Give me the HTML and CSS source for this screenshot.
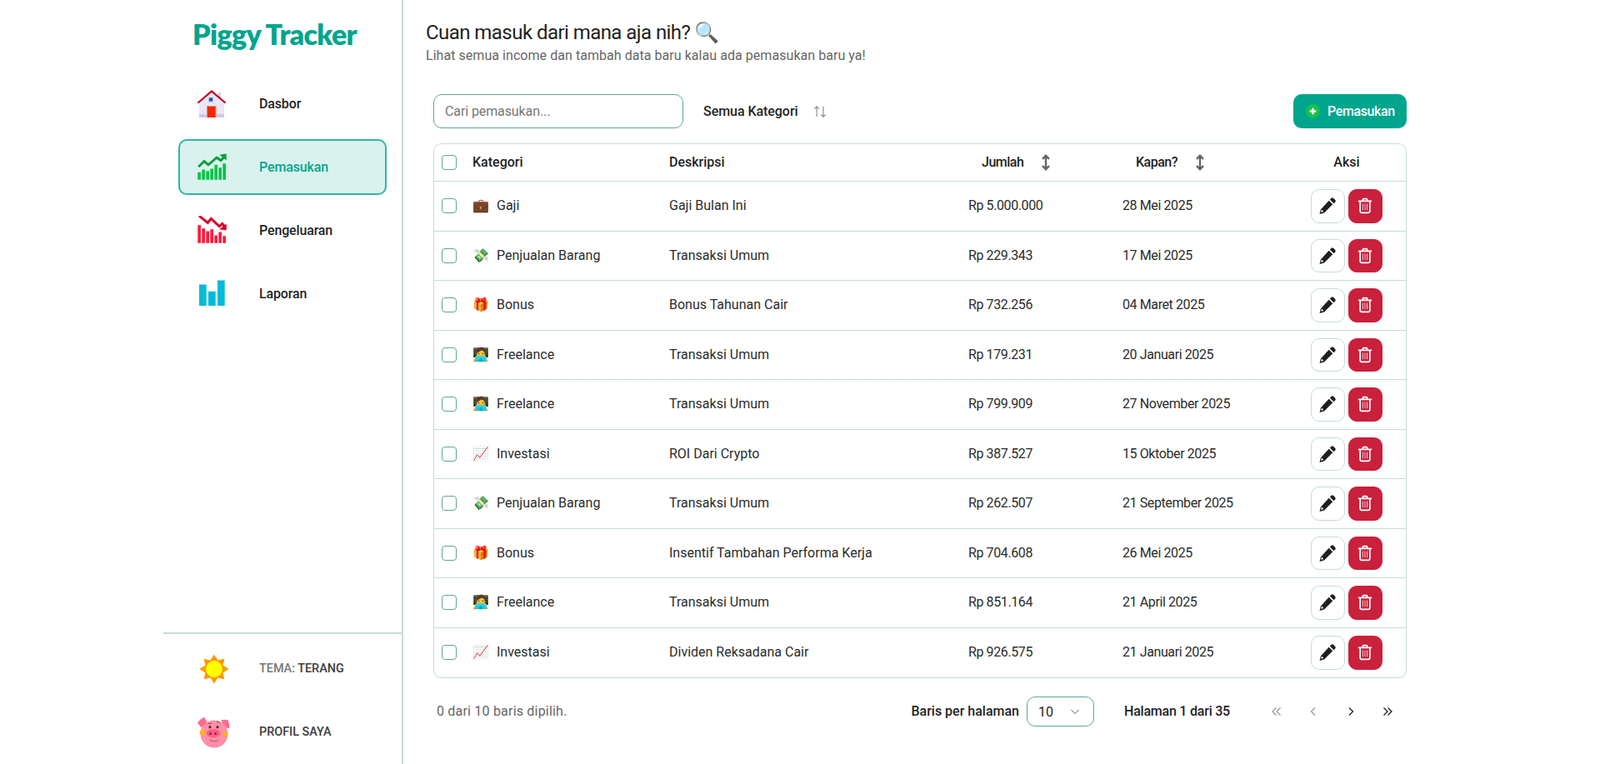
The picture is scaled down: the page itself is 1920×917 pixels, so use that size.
FILE: index.html
```html
<!DOCTYPE html>
<html lang="id">
<head>
<meta charset="utf-8">
<title>Piggy Tracker</title>
<link rel="stylesheet" href="styles.css">
</head>
<body>
<svg class="sprites" aria-hidden="true">
  <symbol id="i-pen" viewBox="0 0 20 20"><path d="M14.200 1.600a1.600 1.600 0 0 1 2.200 0l2 2a1.600 1.600 0 0 1 0 2.200l-1.600 1.600-4.200-4.200zM11.500 4.300l4.200 4.200-9.300 9.300-5 1.200 1.200-5zM3.600 14.200l-.7 2.900 2.900-.7z"/></symbol>
  <symbol id="i-trash" viewBox="0 0 20 20"><path d="M2.600 4.400h14.800M7.400 4.200V2.600c0-.5.4-.9.900-.9h3.400c.5 0 .9.400.9.900v1.600M4.200 4.600v11.800c0 1.100.8 1.900 1.900 1.900h7.800c1.100 0 1.900-.8 1.900-1.900V4.600" fill="none" stroke="currentColor" stroke-width="1.700" stroke-linecap="round"/><path d="M7.400 7.600v7.600M10 7.600v7.600M12.600 7.600v7.600" fill="none" stroke="currentColor" stroke-width="1" opacity=".75"/></symbol>
  <symbol id="i-sort" viewBox="0 0 14 20"><path d="M7 2.500v15M3 5.800 7 1.800l4 4M3 14.200l4 4 4-4" fill="none" stroke="currentColor" stroke-width="2.400"/></symbol>
</svg>
<div class="app">
  <aside class="sidebar">
    <div class="logo">Piggy Tracker</div>
    <nav class="nav">
      <a class="nav-item">
        <svg class="nav-icon" viewBox="0 0 36 36"><path d="M25.500 4H29v12h-3.500z" fill="#d6d2f0"/><path d="M3 15 18 3l15 12v19H3z" fill="#e8e6f7"/><path d="M3 30h30v4H3z" fill="#cfc8ee"/><path d="M14 9.500h6v6h-6z" fill="#b9c3e8"/><path d="M15 10.500h4v4h-4z" fill="#2c4fa8"/><path d="M12 20h11.500v14H12z" fill="#f08a70"/><path d="M13 21h9.500v13H13z" fill="#ee2a05"/><path d="M1.500 16.500 18 2.500l16.500 14" fill="none" stroke="#c4001a" stroke-width="2.200"/></svg>
        <span>Dasbor</span>
      </a>
      <a class="nav-item is-active">
        <svg class="nav-icon" viewBox="0 0 36 36"><path d="M1.300 23.800H5v9H1.300zM6.300 20.500H10v12.300H6.300zM11.300 22.200H15v10.600h-3.700zM16.300 19.500H20v13.300h-3.700zM21.300 14.800H25v18h-3.700zM26.300 18.200H30v14.600h-3.700zM31.300 13.200H35v19.600h-3.700z" fill="#0cc24a"/><path d="M2.300 17.200 9 10.500l5 4.300L24 6.200l5 3.300 5.700-5.700" fill="none" stroke="#0aa03c" stroke-width="3"/><path d="m27.300 2.800 8.400-1.300v8z" fill="#0aa03c"/></svg>
        <span>Pemasukan</span>
      </a>
      <a class="nav-item">
        <svg class="nav-icon" viewBox="0 0 36 36"><path d="M1.300 11.200H5v21.600H1.300zM6.300 15.200H10v17.600H6.300zM11.300 18.500H15v14.300h-3.700zM16.300 16.200H20v16.600h-3.700zM21.300 23.500H25v9.300h-3.700zM26.300 19.500H30v13.300h-3.700zM31.300 24.200H35v8.600h-3.700z" fill="#ff1a3c"/><path d="m3 .2 10.300 8.300 4-5 10 9.300 3.400-3.300 4 4.700" fill="none" stroke="#d8002e" stroke-width="3"/><path d="m27.300 16.200 8.400 1.300v-8z" fill="#d8002e"/></svg>
        <span>Pengeluaran</span>
      </a>
      <a class="nav-item">
        <svg class="nav-icon" viewBox="0 0 36 36"><path d="M3 6.500h8.700V32H3zM14 14.700h8.700V32H14zM25 1.500h8.700V32H25z" fill="#00bcd9"/></svg>
        <span>Laporan</span>
      </a>
    </nav>
    <div class="side-bottom">
      <a class="nav-item nav-upper">
        <svg class="nav-icon nav-icon-wide" viewBox="0 0 40 40"><path d="M21 2.500 25.400 9.380 33.370 7.630 31.620 15.600 38.500 20 31.620 24.400 33.370 32.370 25.400 30.620 21 37.500 16.600 30.620 8.630 32.370 10.380 24.400 3.500 20 10.380 15.600 8.630 7.630 16.600 9.380z" fill="#ff9800"/><circle cx="21" cy="20" r="10" fill="#ffff00"/></svg>
        <span><span class="muted">TEMA:</span> TERANG</span>
      </a>
      <a class="nav-item nav-upper">
        <svg class="nav-icon nav-icon-wide" viewBox="0 0 40 40"><path d="M1 8.700C3 5.500 6 3 9.300 2l3.400 6-7 6.500zM29.300 5.300c3-.9 6-.9 8.400 0 1 3 1.600 6.500 1.600 10L33 14z" fill="#ff6b8e"/><ellipse cx="21" cy="22" rx="16.500" ry="16.500" fill="#ff8fa8"/><circle cx="7" cy="20.300" r="3.300" fill="#ffb020"/><circle cx="34" cy="22" r="3" fill="#ffb020"/><ellipse cx="20" cy="21.300" rx="8.300" ry="5" fill="#ff5c85"/><circle cx="16.700" cy="21.700" r="1.400" fill="#7a2a38"/><circle cx="22.700" cy="21.700" r="1.400" fill="#7a2a38"/><circle cx="16" cy="13.700" r="1.600" fill="#5a2a2a"/><circle cx="25" cy="13.700" r="1.600" fill="#5a2a2a"/><path d="M13.500 10c1.500-1 3-1 4.500-.5M24 7.500c1.500 0 3 .5 4 1.500" fill="none" stroke="#7a3a3a" stroke-width=".9"/><path d="M15.300 28.700Q21 32.500 26 29.700" fill="none" stroke="#b84860" stroke-width="1"/></svg>
        <span>PROFIL SAYA</span>
      </a>
    </div>
  </aside>
  <main class="main">
    <header class="page-head">
      <h1 class="page-title">Cuan masuk dari mana aja nih? <span class="title-emoji">🔍</span></h1>
      <p class="page-sub">Lihat semua income dan tambah data baru kalau ada pemasukan baru ya!</p>
    </header>
    <div class="content">
      <div class="toolbar">
        <input class="search" type="text" placeholder="Cari pemasukan...">
        <div class="filter">
          <span>Semua Kategori</span>
          <svg class="filter-icon" viewBox="0 0 16 16"><path d="M4.500 13.500v-11M2 5l2.500-2.500L7 5M11.500 2.500v11M9 11l2.500 2.500L14 11" fill="none" stroke="currentColor" stroke-width="1"/></svg>
        </div>
        <button class="add-btn" type="button">
          <svg class="add-icon" viewBox="0 0 16 16"><circle cx="8" cy="8" r="8" fill="#16c050"/><path d="M8 4.500v7M4.500 8h7" stroke="#fff" stroke-width="2.200"/></svg>
          Pemasukan
        </button>
      </div>
      <div class="table-wrap">
        <table class="table">
          <colgroup>
            <col class="col-check"><col class="col-cat"><col class="col-desc"><col class="col-amount"><col class="col-date"><col class="col-action">
          </colgroup>
          <thead>
            <tr>
              <th class="cell-check"><span class="check"></span></th>
              <th>Kategori</th>
              <th>Deskripsi</th>
              <th class="th-sort"><span class="sort-label">Jumlah<svg class="sort-icon"><use href="#i-sort"/></svg></span></th>
              <th class="th-sort"><span class="sort-label">Kapan?<svg class="sort-icon"><use href="#i-sort"/></svg></span></th>
              <th class="th-action">Aksi</th>
            </tr>
          </thead>
          <tbody id="rows"></tbody>
        </table>
      </div>
      <div class="foot">
        <div class="foot-count">0 dari 10 baris dipilih.</div>
        <div class="foot-label">Baris per halaman</div>
        <div class="select"><span>10</span><svg class="select-icon" viewBox="0 0 16 16"><path d="m3.500 6 4.500 4.500L12.500 6" fill="none" stroke="currentColor" stroke-width="1.200"/></svg></div>
        <div class="foot-page">Halaman 1 dari 35</div>
        <div class="pager">
          <svg class="page-btn is-off" viewBox="0 0 16 16"><path d="M7.500 3.500 3 8l4.500 4.500M12.500 3.500 8 8l4.500 4.500"/></svg>
          <svg class="page-btn is-off" viewBox="0 0 16 16"><path d="M10 3.500 5.500 8l4.500 4.500"/></svg>
          <svg class="page-btn" viewBox="0 0 16 16"><path d="M6 3.500 10.500 8 6 12.500"/></svg>
          <svg class="page-btn" viewBox="0 0 16 16"><path d="M3.500 3.500 8 8l-4.500 4.500M8.500 3.500 13 8l-4.500 4.500"/></svg>
        </div>
      </div>
    </div>
  </main>
</div>
<script src="app.js"></script>
</body>
</html>
```
FILE: app.js
```js
var data = [
  ["💼", "Gaji", "Gaji Bulan Ini", "Rp 5.000.000", "28 Mei 2025"],
  ["💸", "Penjualan Barang", "Transaksi Umum", "Rp 229.343", "17 Mei 2025"],
  ["🎁", "Bonus", "Bonus Tahunan Cair", "Rp 732.256", "04 Maret 2025"],
  ["🧑‍💻", "Freelance", "Transaksi Umum", "Rp 179.231", "20 Januari 2025"],
  ["🧑‍💻", "Freelance", "Transaksi Umum", "Rp 799.909", "27 November 2025"],
  ["📈", "Investasi", "ROI Dari Crypto", "Rp 387.527", "15 Oktober 2025"],
  ["💸", "Penjualan Barang", "Transaksi Umum", "Rp 262.507", "21 September 2025"],
  ["🎁", "Bonus", "Insentif Tambahan Performa Kerja", "Rp 704.608", "26 Mei 2025"],
  ["🧑‍💻", "Freelance", "Transaksi Umum", "Rp 851.164", "21 April 2025"],
  ["📈", "Investasi", "Dividen Reksadana Cair", "Rp 926.575", "21 Januari 2025"]
];
document.getElementById("rows").innerHTML = data.map(function (r) {
  return '<tr><td class="cell-check"><span class="check"></span></td>' +
    '<td><span class="cat"><span class="emoji">' + r[0] + '</span>' + r[1] + '</span></td>' +
    '<td>' + r[2] + '</td><td class="cell-num">' + r[3] + '</td><td class="cell-num">' + r[4] + '</td>' +
    '<td class="cell-action"><span class="actions">' +
    '<button class="act act-edit" type="button"><svg class="act-icon"><use href="#i-pen"/></svg></button>' +
    '<button class="act act-del" type="button"><svg class="act-icon"><use href="#i-trash"/></svg></button>' +
    '</span></td></tr>';
}).join("");
```
FILE: styles.css
```css
* { box-sizing: border-box; }
html, body { margin: 0; height: 100%; }
body {
  background: #fff;
  color: #1f1f1f;
  font-family: Roboto, "Noto Color Emoji", sans-serif;
  font-size: 16px;
  overflow: hidden;
}
.sprites { display: none; }
.app { display: flex; max-width: 1528px; height: 917px; margin: 0 auto; }

.sidebar {
  width: 288px;
  flex: none;
  display: flex;
  flex-direction: column;
  border-right: 2px solid #c5dcd9;
}
.logo {
  height: 91px;
  padding: 19px 0 0 35px;
  font-family: Lato, sans-serif;
  font-size: 34px;
  font-weight: 800;
  line-height: 44px;
  letter-spacing: -0.65px;
  color: #00a58d;
}
.nav { display: flex; flex-direction: column; gap: 9px; padding: 0 18px; }
.nav-item {
  display: flex;
  align-items: center;
  height: 67px;
  padding-left: 20px;
  border: 2px solid transparent;
  border-radius: 10px;
  font-weight: 500;
  letter-spacing: -0.15px;
  color: #1f1f1f;
}
.nav-item.is-active { background: #d9f2ee; border-color: #2fb5a3; color: #00a58d; }
.nav-icon { width: 36px; height: 36px; margin-right: 39px; flex: none; }
.nav-icon-wide { width: 40px; height: 40px; margin-right: 35px; }
.nav-upper { color: #3c3c3c; font-size: 14.4px; letter-spacing: 0; }
.muted { color: #777; }
.side-bottom {
  margin-top: auto;
  padding: 8px 18px 5px;
  display: flex;
  flex-direction: column;
  gap: 9px;
  border-top: 2px solid #c5dcd9;
}

.main { flex: 1; padding: 0 36px 0 27px; min-width: 0; }
.page-head { height: 113px; padding-top: 22px; }
.page-title { margin: 0; font-size: 24px; font-weight: 400; line-height: 34px; letter-spacing: -0.55px; color: #1f1f1f; }
.title-emoji { letter-spacing: 0; }
.page-sub { margin: 0; font-size: 16px; line-height: 22px; letter-spacing: 0.05px; color: #666; }
.content { padding-left: 9px; }

.toolbar { display: flex; align-items: center; height: 41px; margin-bottom: 18px; }
.search {
  width: 300px;
  height: 41px;
  padding: 0 13px;
  border: 1px solid #5fa59a;
  border-radius: 10px;
  background: #fff;
  font: inherit;
  letter-spacing: -0.1px;
  color: #1f1f1f;
  outline: none;
}
.search::placeholder { color: #777; }
.filter { display: flex; align-items: center; gap: 17px; margin-left: 24px; font-weight: 500; white-space: nowrap; letter-spacing: -0.05px; }
.filter-icon { width: 18px; height: 18px; color: #888; }
.add-btn {
  display: flex;
  align-items: center;
  gap: 9px;
  width: 136px;
  height: 41px;
  margin-left: auto;
  padding: 0 0 0 15px;
  border: 0;
  border-radius: 10px;
  background: #00a58d;
  color: #fff;
  font: inherit;
  font-weight: 500;
  letter-spacing: -0.4px;
}
.add-icon { width: 17px; height: 17px; }

.table-wrap { border: 1px solid #c5dcd9; border-radius: 10px; overflow: hidden; }
.table { width: 100%; table-layout: fixed; border-collapse: separate; border-spacing: 0; }
.col-check { width: 46px; }
.col-cat { width: 236px; }
.col-desc { width: 359px; }
.col-amount { width: 185px; }
.col-date { width: 198px; }
.table th, .table td { padding: 0; text-align: left; font-size: 16px; line-height: 22px; border-bottom: 1px solid #c5dcd9; }
.table th { height: 45px; font-weight: 500; }
.table td { height: 59.5px; color: #2c2c2c; }
.table tbody tr:last-child td { border-bottom: 0; }
.table td.cell-num { letter-spacing: -0.4px; }
.check { display: block; width: 18px; height: 18px; margin-left: 9px; border: 1px solid #5fa59a; border-radius: 4px; }
.th-sort { padding-left: 16px !important; }
.sort-label { display: inline-flex; align-items: center; gap: 20px; letter-spacing: -0.5px; }
.sort-icon { width: 14px; height: 20px; color: #666; }
.th-action { text-align: center !important; }
.cat { display: flex; align-items: center; gap: 9px; }
.emoji { width: 20px; font-size: 16px; }
.actions { display: flex; justify-content: center; gap: 4px; }
.act {
  display: flex;
  align-items: center;
  justify-content: center;
  width: 41px;
  height: 40.5px;
  padding: 0;
  border-radius: 10px;
  border: 1px solid #c5dcd9;
  background: #fff;
  color: #1f1f1f;
}
.act-del { background: #c9203c; border-color: #c9203c; color: #fff; }
.act-icon { width: 20px; height: 20px; margin-right: 2px; fill: currentColor; }
.act-edit .act-icon { width: 22px; height: 22px; }

.foot { display: flex; align-items: center; height: 36px; margin-top: 22px; padding-left: 4px; white-space: nowrap; }
.foot-count { color: #666; margin-right: auto; padding-bottom: 2px; letter-spacing: 0.2px; }
.foot-label { font-weight: 500; margin-right: 9px; padding-bottom: 2px; }
.select {
  display: flex;
  align-items: center;
  justify-content: space-between;
  width: 81px;
  height: 36px;
  padding: 0 14px 0 13px;
  border: 1px solid #5fa59a;
  border-radius: 10px;
}
.select-icon { width: 16px; height: 16px; color: #999; }
.foot-page { margin-left: 36px; font-weight: 500; padding-bottom: 2px; letter-spacing: -0.22px; }
.pager { display: flex; gap: 28.5px; margin-left: 47.5px; margin-right: 15px; }
.page-btn { width: 16px; height: 16px; fill: none; stroke: #1f1f1f; stroke-width: 1.3; }
.page-btn.is-off { stroke: #999; }
```
